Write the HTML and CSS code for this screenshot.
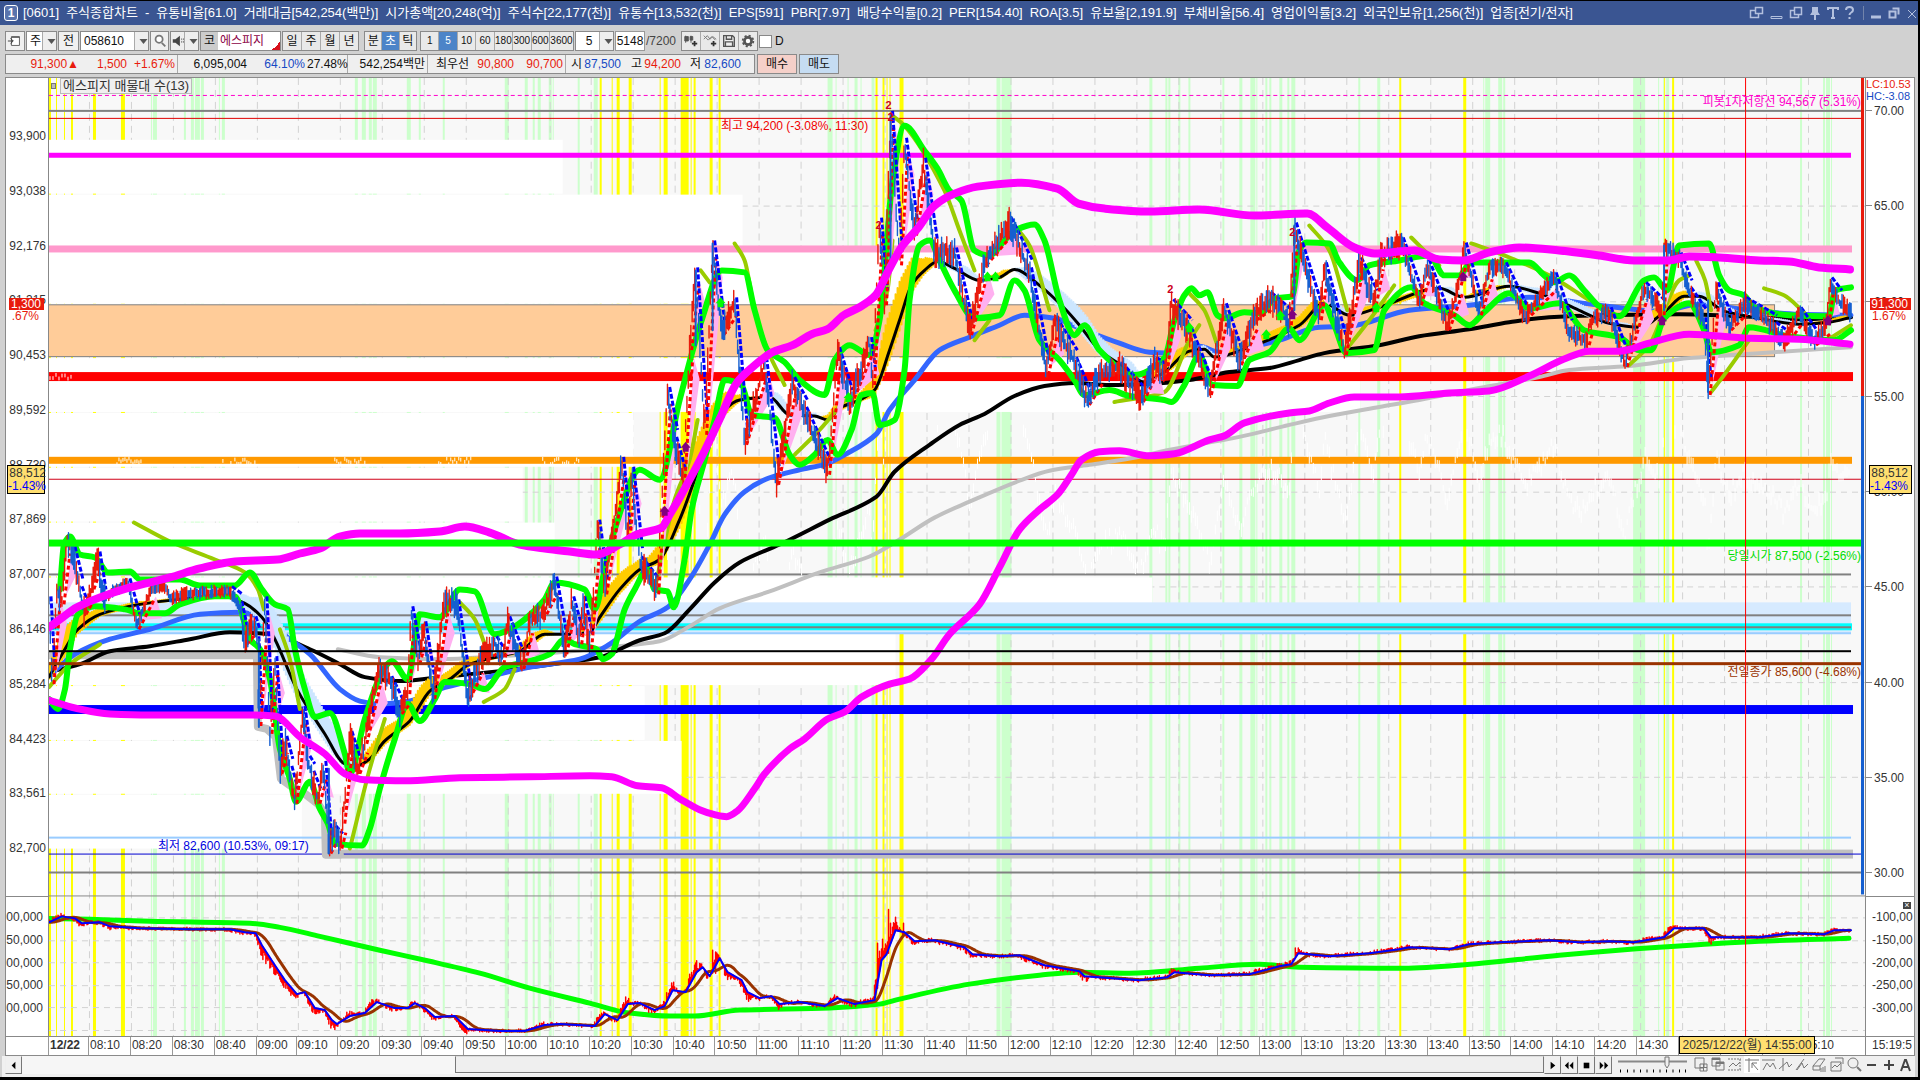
FILE: index.html
```html
<!DOCTYPE html>
<html lang="ko">
<head>
<meta charset="utf-8">
<title>[0601] 주식종합차트</title>
<link rel="stylesheet" href="styles.css">
</head>
<body>
<svg class="defs" aria-hidden="true">
  <symbol id="down" viewBox="0 0 14 18"><path d="M3.5 7h8l-4 5z" fill="#555"/></symbol>
</svg>
<div class="window">
  <header class="titlebar">
    <span class="badge">1</span>
    <h1><span>[0601]</span> <span>주식종합차트</span> <span>-</span> <span>유통비율[61.0]</span> <span>거래대금[542,254(백만)]</span> <span>시가총액[20,248(억)]</span> <span>주식수[22,177(천)]</span> <span>유통수[13,532(천)]</span> <span>EPS[591]</span> <span>PBR[7.97]</span> <span>배당수익률[0.2]</span> <span>PER[154.40]</span> <span>ROA[3.5]</span> <span>유보율[2,191.9]</span> <span>부채비율[56.4]</span> <span>영업이익률[3.2]</span> <span>외국인보유[1,256(천)]</span> <span>업종[전기/전자]</span></h1>
    <svg class="winicons" viewBox="0 0 170 24" width="170" height="24" fill="none" stroke="#b3c0de">
      <path d="M7.500 6.500h7v6h-7zM2.500 9.500h5v3h3v4h-8z" stroke-width="1.500"/>
      <path d="M23 15.500h11v2h-11z"/>
      <path d="M46.500 6.500h7v7h-7zM42.500 9.500h4v4h4v3h-8z" stroke-width="1.500"/>
      <path d="M64 6h6v5l2 3h-4v5h-2v-5h-4l2-3z" fill="#b3c0de" stroke="none"/>
      <path d="M80 9v-2h10v2M85 7v10M83 17h4" stroke-width="2"/>
      <path d="M98 9c0-4 7-4 7 0 0 3-3.500 2-3.500 5M101.500 16v2" stroke-width="2"/>
      <path d="M115.500 5v14" stroke="#7284ab"/>
      <path d="M123 16h10" stroke-width="3"/>
      <path d="M144.500 7.500h6v6M141.500 10.500h6v6h-6z" stroke-width="2"/>
      <path d="M160 9l8 8M168 9l-8 8"/>
    </svg>
  </header>

  <div class="toolbar">
    <button class="tb w18" aria-label="패널"><svg viewBox="0 0 18 18"><path d="M5 4h9v10H5zM5 5h9" stroke="#555" fill="#fff"/><path d="M1 9h6l-3-3M7 9l-3 3" stroke="#333" fill="none"/></svg></button>
    <div class="combo w31"><select aria-label="구분"><option>주</option></select><button aria-label="열기"><svg><use href="#down"/></svg></button></div>
    <button class="tb w22">전</button>
    <div class="combo w68"><input aria-label="종목코드" value="058610"><button aria-label="목록"><svg><use href="#down"/></svg></button></div>
    <button class="tb w20" aria-label="검색"><svg viewBox="0 0 18 18"><circle cx="8" cy="7" r="4" fill="#fff" stroke="#777" stroke-width="2"/><path d="M11 11l4 4" stroke="#777" stroke-width="2"/></svg></button>
    <div class="combo w28"><button class="grow" aria-label="소리"><svg viewBox="0 0 18 18"><path d="M2 7h3l5-4v12l-5-4H2z" fill="#444"/><path d="M12 6v6M14 6v6" stroke="#777" stroke-dasharray="2 1"/></svg></button><button aria-label="소리 옵션"><svg><use href="#down"/></svg></button></div>
    <div class="stock"><b>코</b><span>에스피지</span><i></i></div>
    <div class="group w76"><button>일</button><button>주</button><button>월</button><button>년</button></div>
    <div class="group w57"><button>분</button><button class="on">초</button><button>틱</button></div>
    <div class="group w153"><button>1</button><button class="on">5</button><button>10</button><button>60</button><button>180</button><button>300</button><button>600</button><button>3600</button></div>
    <div class="combo w38"><input class="mid" aria-label="주기" value="5"><button aria-label="주기 목록"><svg><use href="#down"/></svg></button></div>
    <label class="count"><input aria-label="봉 개수" value="5148">/7200</label>
    <div class="group w77">
      <button aria-label="차트 추가"><svg viewBox="0 0 18 18"><path d="M3 3v8M2 4h4v5H2zM9 3v8M8 4h3v4H8z" fill="#555" stroke="#555"/><path d="M13 9v6M10 12h6" stroke="#333" stroke-width="2"/></svg></button>
      <button aria-label="지표 추가"><svg viewBox="0 0 18 18"><path d="M2 7l4-4 3 4 3-3 4 3M2 3l5 5 4-4 4 4" stroke="#777" fill="none"/><path d="M13 9v6M10 12h6" stroke="#333" stroke-width="2"/></svg></button>
      <button aria-label="저장"><svg viewBox="0 0 18 18"><path d="M3 3h10l2 2v10H3zM6 3v4h6V3M5 15v-5h8v5" stroke="#555" fill="#eee" stroke-width="1.500"/></svg></button>
      <button aria-label="설정"><svg viewBox="0 0 18 18"><circle cx="9" cy="9" r="4" stroke="#555" stroke-width="3" fill="#fff"/><circle cx="9" cy="9" r="6" stroke="#555" stroke-width="2" fill="none" stroke-dasharray="2.400 2.300"/></svg></button>
    </div>
    <label class="check"><input type="checkbox">D</label>
  </div>

  <div class="quotes">
    <div class="strip">
      <span class="up">91,300▲</span><span class="up">1,500</span><span class="up sep">+1.67%</span>
      <span>6,095,004</span><span class="dn">64.10%</span><span class="sep">27.48%</span><span class="tail">542,254백만</span>
      <span>최우선</span><span class="up">90,800</span><span class="up sep">90,700</span>
      <span>시</span><span class="dn">87,500</span><span>고</span><span class="up">94,200</span><span>저</span><span class="dn">82,600</span>
    </div>
    <button class="buy">매수</button><button class="sell">매도</button>
  </div>

  <main class="chart">
    <div class="axis left">
      <div class="scale main"><span>93,900</span><span>93,038</span><span>92,176</span><span>91,315</span><span>90,453</span><span>89,592</span><span>88,730</span><span>87,869</span><span>87,007</span><span>86,146</span><span>85,284</span><span>84,423</span><span>83,561</span><span>82,700</span></div>
      <div class="scale sub"><span>00,000</span><span>50,000</span><span>00,000</span><span>50,000</span><span>00,000</span></div>
      <div class="tag price"><b>1,300</b><span>.67%</span></div>
      <div class="tag cursor"><span>88,512</span><b>-1.43%</b></div>
    </div>
    <div class="plot">
      <svg id="plot" viewBox="49 77 1817 961" preserveAspectRatio="none"></svg>
      <span class="legend"><i></i><b>에스피지 매물대 수(13)</b></span>
      <span class="note high">최고 94,200 (-3.08%, 11:30)</span>
      <span class="note low">최저 82,600 (10.53%, 09:17)</span>
      <span class="note pivot">피봇1차저항선 94,567 (5.31%)</span>
      <span class="note open">당일시가 87,500 (-2.56%)</span>
      <span class="note prev">전일종가 85,600 (-4.68%)</span>
    </div>
    <div class="axis right">
      <div class="limits"><span class="up">LC:10.53</span><span class="dn">HC:-3.08</span></div>
      <div class="scale main"><span>70.00</span><span>65.00</span><span>60.00</span><span>55.00</span><span>50.00</span><span>45.00</span><span>40.00</span><span>35.00</span><span>30.00</span></div>
      <div class="scale sub"><span>-100,00</span><span>-150,00</span><span>-200,00</span><span>-250,00</span><span>-300,00</span></div>
      <div class="tag price"><b>91,300</b><span>1.67%</span></div>
      <div class="tag cursor"><span>88,512</span><b>-1.43%</b></div>
      <button class="close" aria-label="닫기">×</button>
    </div>
    <div class="times" id="times"></div>
    <div class="last">15:19:5</div>
  </main>

  <footer class="bottom">
    <button class="key" aria-label="왼쪽"><svg viewBox="0 0 16 16"><path d="M10 4v8L6 8z"/></svg></button>
    <div class="track"><div class="thumb"></div></div>
    <button class="key" aria-label="재생"><svg viewBox="0 0 16 16"><path d="M6 4v8l5-4z"/></svg></button>
    <button class="key" aria-label="뒤로"><svg viewBox="0 0 16 16"><path d="M7 4v8L3 8zM12 4v8L8 8z"/></svg></button>
    <button class="key" aria-label="정지"><svg viewBox="0 0 16 16"><path d="M5 5h6v6H5z"/></svg></button>
    <button class="key" aria-label="앞으로"><svg viewBox="0 0 16 16"><path d="M4 4v8l4-4zM9 4v8l4-4z"/></svg></button>
    <svg class="zoombar" viewBox="0 0 70 17"><path d="M0 5.500h69" stroke="#888" stroke-width="2"/><path d="M2.500 13.500v3M9.500 13.500v3M16 13.500v3M22.500 13.500v3M29 13.500v3M35.500 13.500v3M42 13.500v3M48.500 13.500v3M55 13.500v3M61.500 13.500v3M67.500 13.500v3" stroke="#000"/><path d="M47 1h4v8l-2 3-2-3z" fill="#eee" stroke="#777"/></svg>
    <svg class="tools" viewBox="0 0 220 18" fill="none" stroke="#777">
      <path d="M1 2h9v10H1zM6 8h7v7H6zM9.500 8v7M6 11.500h7"/>
      <path d="M18 2h8v8h-8zM22 6h8v8h-8z" fill="#eee"/><path d="M18 3h8M22 7h8" stroke-width="2"/>
      <path d="M34 3h13M34 14h13M46 3v11" stroke-dasharray="2 1"/><path d="M35 11l4-4 3 3 4-4"/>
      <path d="M50 0h16v17H50z" fill="#fff" stroke="none"/><path d="M51 4h14M55 2v14M58 7l6 7M58 12V7h5"/>
      <path d="M68 4h13M69 14l4-7 3 4 3-4 3 6"/>
      <path d="M89 2v13M85 13l8-7 2 5 3-3"/>
      <path d="M102 14l8-11M103 14l5-7 2 5 4-4"/>
      <path d="M119 10l6-7h6l-5 7zM119 10v4h7v-4M127 12v4M129 11v5M131 10v6"/>
      <path d="M141 2h8v6M137 6h10v9h-10z" fill="#eee"/><path d="M138 12l3-3 2 2 4-4"/>
      <circle cx="159" cy="7" r="5"/><path d="M163 11l4 4" stroke-width="2"/>
      <path d="M173 9h9M190 9h10M195 4v10" stroke="#444" stroke-width="2"/>
      <path d="M207 15l4-11h1l4 11M209 11h6" stroke="#444" stroke-width="2"/>
    </svg>
  </footer>
</div>
<script src="chart.js"></script>
</body>
</html>
```
FILE: styles.css
```css
* { box-sizing: border-box; }
body { margin: 0; background: #000; color: #111; font: 12px/16px "Liberation Sans", "Noto Sans CJK KR", sans-serif; }
button, input, select { font: inherit; color: inherit; margin: 0; padding: 0; border: 0; border-radius: 0; min-width: 0; }
.defs { position: absolute; width: 0; height: 0; }
.window { height: 100vh; padding: 1px 3px 0 2px; display: flex; flex-direction: column; background: #d1d1d1; border-bottom: 3px solid #000; border-top: 1px solid #000; border-right: 2px solid #000; }
.up { color: #e81b0c; }
.dn { color: #1549c4; }

.titlebar { flex: 0 0 24px; margin: -1px -3px 0 -2px; padding: 0 0 0 4px; display: flex; align-items: center; gap: 5px; background: #3a5592; color: #fff; overflow: hidden; white-space: nowrap; }
.titlebar h1 { flex: 1; margin: 0; display: flex; gap: 7px; font-size: 13px; font-weight: 400; }
.badge { width: 14px; height: 16px; border: 1px solid #fff; border-radius: 3px; text-align: center; line-height: 15px; font-weight: 700; background: #5a74ad; }

.toolbar { flex: 0 0 20px; margin: 6px 0 0 3px; display: flex; gap: 1px; white-space: nowrap; }
.toolbar svg { width: 16px; height: 18px; display: block; margin: auto; }
.tb, .combo, .group, .stock { height: 20px; border: 1px solid #8a8a8a; background: #f0f0f0; display: flex; }
.tb { justify-content: center; align-items: center; }
.combo select, .combo input { flex: 1; width: 0; appearance: none; background: #fff; padding-left: 3px; }
.combo button { flex: 0 0 14px; background: #eee; border-left: 1px solid #aaa; overflow: hidden; }
.combo .grow { flex: 1; border: 0; }
.combo .mid { text-align: center; }
.group button { flex: 1; background: #e9e9e9; border-left: 1px solid #aaa; overflow: hidden; display: flex; justify-content: center; align-items: center; }
.group button:first-child { border-left: 0; }
.group .on { background: #4c84c8; color: #fff; }
.w18 { width: 20px; } .w31 { width: 31px; } .w22 { width: 21px; } .w68 { width: 69px; } .w20 { width: 19px; } .w28 { width: 29px; }
.w76 { width: 77px; } .w57 { width: 53px; margin-left: 4px; } .w153 { width: 154px; margin-left: 2px; } .w38 { width: 39px; } .w77 { width: 77px; margin-left: 3px; }
.w153 button { font-size: 10px; }
.w153 button:last-child { flex: 0 0 24px; }
.stock { position: relative; width: 81px; background: #fff; }
.stock b { width: 17px; background: #ccc; text-align: center; font-weight: 400; line-height: 18px; }
.stock span { color: #8b0045; padding-left: 2px; line-height: 18px; }
.stock i { position: absolute; right: 0; bottom: 0; width: 8px; height: 8px; background: linear-gradient(135deg, transparent 50%, #d8101c 50%); }
.count { display: flex; align-items: center; width: 62px; color: #444; }
.count input { width: 30px; height: 20px; border: 1px solid #999; background: #fff; text-align: center; color: #111; margin-right: 1px; }
.check { display: flex; align-items: center; gap: 3px; }
.check input { appearance: none; width: 13px; height: 13px; border: 1px solid #888; background: #fff; }

.quotes { flex: 0 0 20px; margin: 3px 0 3px 3px; display: flex; gap: 2px; white-space: nowrap; }
.strip { width: 750px; border: 1px solid #8a8a8a; background: #efefef; display: grid; grid-template-columns: 75px 48px 49px 71px 58px 41px 80px 43px 45px 50px 18px 39px 21px 39px 20px 40px; line-height: 18px; text-align: right; }
.strip span { padding-right: 2px; }
.strip .sep, .strip .tail { border-right: 1px solid #aaa; }
.quotes button { width: 40px; border: 1px solid #8a8a8a; }
.quotes .buy { background: #f5d0c9; }
.quotes .sell { background: #c5dcf2; }

.chart { flex: 1; min-height: 0; margin: 0 0 0 3px; display: grid; grid-template: minmax(0, 1fr) 19px / 43px minmax(0, 1fr) 49px; background: #fff; border: 1px solid #8a8a8a; color: #333; }
.axis { position: relative; overflow: hidden; white-space: nowrap; display: grid; grid-template: minmax(0, 41fr) minmax(0, 7fr) / minmax(0, 1fr); }
.left { border-right: 1px solid #888; }
.right { border-left: 1px solid #888; }
.scale { display: flex; flex-direction: column; justify-content: space-between; align-items: flex-end; }
.scale + .scale { border-top: 1px solid #888; }
.left .main { padding: 50px 2px 40px 0; }
.right .main { padding: 25px 4px 15px 0; align-items: flex-start; }
.right .main span::before { content: ""; display: inline-block; width: 6px; margin-right: 2px; border-top: 1px solid #888; vertical-align: 4px; }
.scale.sub { padding: 12px 5px 20px 0; }
.right .sub { align-items: flex-start; padding-left: 6px; }
.limits { position: absolute; top: 0; left: 0; line-height: 12px; font-size: 11px; display: grid; z-index: 1; }
.tag { position: absolute; right: 4px; left: 3px; display: grid; text-align: right; line-height: 12px; }
.tag b { font-weight: 400; }
.price { top: 23%; color: #e81b0c; }
.price b { background: #e81b0c; color: #fff; padding-right: 3px; }
.price span { padding-right: 5px; }
.right .price { left: 4px; right: 3px; }
.cursor { top: 40.400%; left: 1px; right: 3px; height: 29px; border: 1px solid #000; background: #ffdf70; padding: 1px 1px 0 0; line-height: 13px; }
.right .cursor { left: 3px; right: 2px; padding-right: 3px; }
.cursor b { color: #00f; }
.close { position: absolute; right: 3px; top: 86%; width: 8px; height: 7px; background: #444; color: #fff; font-size: 9px; line-height: 7px; }

.plot { position: relative; background: #f8f8f8; overflow: hidden; white-space: nowrap; }
.plot svg { position: absolute; inset: 0; width: 100%; height: 100%; }
.legend { position: absolute; top: 0; left: 2px; display: flex; align-items: center; gap: 4px; font-size: 13px; }
.legend i { width: 5px; height: 6px; border: 1px solid #777; background: #bbb; }
.legend b { font-weight: 400; padding: 0 2px; line-height: 14px; border: 1px solid #bbb; background: #f0f0f0; }
.note { position: absolute; line-height: 16px; }
.high { left: 37%; top: 4.200%; color: #f00000; }
.low { left: 6%; top: 79.300%; color: #0000e0; }
.pivot { right: 4px; top: 1.700%; color: #f0c; }
.open { right: 4px; top: 49.100%; color: #0d0; }
.prev { right: 4px; top: 61.200%; color: #930; }

.times { grid-column: 1 / 3; position: relative; display: flex; padding-left: 42px; border-top: 1px solid #888; }
.times span { border-left: 1px solid #999; padding-left: 1px; min-width: 0; white-space: nowrap; line-height: 16px; }
.times span:first-child { font-weight: 700; }
.times .now { position: absolute; left: 90%; width: 136px; top: -1px; height: 18px; border: 1px solid #000; background: #ffdf70; text-align: center; line-height: 16px; white-space: nowrap; }
.times .cut { padding-left: 6px; }
.last { border-top: 1px solid #888; border-left: 1px solid #888; padding-left: 6px; line-height: 16px; }

.bottom { flex: 0 0 20px; padding: 0 1px 3px 3px; display: flex; background: #f0f0f0; }
.key { width: 17px; background: #f0f0f0; border: 1px solid #777; border-top-color: #eee; border-left-color: #eee; }
.key svg { display: block; width: 15px; height: 15px; fill: #000; }
.track { flex: 1; padding-left: 22.700%; background: #f6f6f6; }
.thumb { height: 17px; background: #efefef; border: 1px solid #777; border-top-color: #ddd; }
.zoombar { width: 70px; height: 17px; margin: 0 6px; }
.tools { width: 220px; height: 18px; }
```
FILE: chart.js
```js
const NS = "http://www.w3.org/2000/svg";
const svg = document.getElementById("plot");
let seed = 7;
const rnd = () => (seed = (seed * 16807) % 2147483647) / 2147483647;
const el = (name, attrs) => {
  const n = document.createElementNS(NS, name);
  for (const k in attrs) n.setAttribute(k, attrs[k]);
  svg.appendChild(n);
};
const rect = (x, y, w, h, fill, stroke) => el("rect", { x, y, width: w, height: h, fill, stroke: stroke || "none" });
const path = (d, stroke, w, dash) => el("path", { d, stroke, "stroke-width": w, fill: "none", "stroke-linejoin": "round", "stroke-linecap": "round", ...(dash ? { "stroke-dasharray": dash, "stroke-linecap": "butt" } : {}) });
const parse = s => s.split(" ").map(p => p.split(",").map(Number));
const line = (s, stroke, w) => path("M" + s.split(" ").join("L"), stroke, w);

/* smooth curve through the points that never overshoots them */
const slopes = p => {
  const k = [];
  for (let i = 1; i < p.length; i++) k.push((p[i][1] - p[i - 1][1]) / (p[i][0] - p[i - 1][0]));
  return p.map((_, i) => {
    if (i === 0) return k[0];
    if (i === p.length - 1) return k[i - 1];
    return k[i - 1] * k[i] <= 0 ? 0 : 2 * k[i - 1] * k[i] / (k[i - 1] + k[i]);
  });
};
const curve = (s, stroke, w) => {
  const p = parse(s), m = slopes(p);
  let d = `M${p[0]}`;
  for (let i = 1; i < p.length; i++) {
    const h = (p[i][0] - p[i - 1][0]) / 3;
    d += `C${p[i - 1][0] + h} ${p[i - 1][1] + m[i - 1] * h} ${p[i][0] - h} ${p[i][1] - m[i] * h} ${p[i][0]} ${p[i][1]}`;
  }
  path(d, stroke, w);
};
const at = (pts, x) => {
  if (x <= pts[0][0]) return pts[0][1];
  for (let i = 1; i < pts.length; i++) if (x <= pts[i][0]) {
    const [a, b] = pts[i - 1], [c, d] = pts[i];
    return b + (d - b) * (x - a) / (c - a);
  }
  return pts[pts.length - 1][1];
};

/* signal stripes */
const green = "151-152 153-157 184-186 191-194 195-200 201-204 219-220 222-225 355-358 362-366 369-372 373-377 407-411 419-421 443-445 505-509 525-528 533-535 538-541 549-552 553-554 578-580 594-598 828-833 836-837 848-849 855-858 861-862 872-875 997-1001 1002-1012 1150-1153 1166-1168 1169-1171 1179-1181 1189-1191 1223-1225 1240-1243 1251-1256 1257-1258 1266-1268 1270-1272 1280-1283 1288-1290 1292-1296 1359-1361 1378-1381 1484-1485 1486-1491 1499-1503 1504-1506 1634-1646 1659-1660 1664-1665 1667-1670 1801-1803 1824-1826 1827-1831 1832-1833";
const yellow = "49-51 56-57 64-65 71-73 93-96 121-125 600-602 612-613 617-620 629-632 660-661 664-668 681-689 691-692 694-696 710-713 719-721 876-878 883-885 887-888 890-891 900-904 1400-1402 1464-1467 1665-1666 1673-1675";
for (const [list, c] of [[green, "#ccffcc"], [yellow, "#ffff00"]])
  for (const r of list.split(" ")) { const [a, b] = r.split("-").map(Number); rect(a, 77, b - a, 961, c); }

/* grid */
const ticks = [89.5, 131.5, 173.5, 215.5, 257.5];
for (let i = 0; i < 37; i++) ticks.push(Math.round(297.7 + i * 41.97) + 0.5);
for (const x of ticks) path(`M${x} 77V1038`, "#d2d2d2", 1, "7 5");
for (const y of [205.5, 301.5, 396.5, 492.5, 587.5, 683.5, 778.5, 919.5, 942.5, 964.5, 987.5, 1009.5, 1032.5]) path(`M49 ${y}H1866`, "#d2d2d2", 1, "6 5");

/* volume-by-price boxes */
for (const [y, h, x] of [[139, 54, 563], [194, 54, 743], [249, 54, 1361], [303, 54, 1361], [358, 54, 1361], [413, 54, 634], [468, 54, 523], [523, 54, 555], [578, 54, 1153], [633, 53, 896], [687, 54, 645], [742, 53, 682], [796, 54, 302]])
  rect(49, y, x - 49, h, "#fff");
rect(48, 304.5, 1727.500, 52, "#ffcc99", "#808080");
rect(49, 603, 1803, 31, "#d6eaff");

/* levels */
path("M49 94.5H1862", "#ff00cc", 1, "4 3");
for (const [y, h, c, x2, x1] of [[109, 2, "#808080", 1862], [117, 1, "#e00000", 1862], [152, 5, "#ff00ff", 1852], [245, 7, "#ff99cc", 1853], [372, 9, "#ff0000", 1854], [457, 7, "#ff9900", 1853], [479, 1, "#d00018", 1862], [574, 2, "#808080", 1852], [615, 2, "#808080", 1852], [624, 7, "#00ffff", 1853], [627, 2, "#808080", 1852], [633, 2, "#99ccff", 1852], [706, 9, "#0000ff", 1854], [838, 2, "#99ccff", 1852], [851, 9, "#c0c0c0", 1854, 325], [855, 1, "#0000d0", 1862], [873, 2, "#808080", 1862]])
  rect(x1 || 49, y, x2 - (x1 || 49), h, c);

const price = parse("49,600 52,680 57,590 62,600 67,540 73,550 80,590 84,610 92,585 98,555 103,600 112,590 128,582 137,625 152,585 165,585 170,598 185,592 230,590 240,605 245,640 254,620 257,640 259,722 265,600 270,730 275,660 280,770 285,740 290,770 295,800 303,710 308,760 312,775 318,800 324,765 329,850 334,830 340,845 343,820 350,735 358,770 365,740 378,670 390,680 400,710 408,690 411,610 418,660 424,625 433,695 445,600 457,603 468,695 480,660 495,640 502,660 508,620 522,665 530,620 545,610 555,580 565,650 572,600 580,640 583,600 590,645 598,523 605,590 622,460 628,540 632,470 640,560 657,590 668,390 675,440 683,480 690,345 696,270 705,430 713,243 722,330 735,300 745,440 765,360 777,480 793,380 805,410 828,470 838,350 850,400 870,340 873,380 880,220 885,300 891,113 900,260 905,140 915,230 924,160 935,250 955,250 970,330 985,260 1010,220 1030,270 1047,370 1055,320 1075,360 1088,400 1100,370 1120,365 1142,397 1155,360 1165,375 1172,302 1190,330 1210,390 1225,306 1240,360 1255,315 1270,295 1290,320 1295,225 1320,315 1325,265 1345,350 1360,260 1375,300 1381,255 1402,240 1420,300 1428,262 1448,325 1460,280 1465,245 1480,310 1490,265 1505,265 1525,315 1555,275 1570,330 1588,340 1590,320 1610,310 1626,362 1645,285 1663,310 1665,245 1680,255 1690,290 1705,320 1709,390 1717,285 1730,325 1745,300 1775,325 1785,340 1800,310 1815,340 1828,320 1831,280 1840,300 1852,310");

/* faint ghost of the comparison series */
let ghost = "";
for (let x = 600; x < 1852; x += 2) {
  const y = at(price, x) + 160 + rnd() * 16;
  if (y > 425 && y < 565) ghost += `M${x} ${y.toFixed(1)}v${(5 + rnd() * 9).toFixed(1)}`;
}
for (let x = 95; x < 600; x += 2)
  if (Math.sin(x / 17) + rnd() > 1.2) ghost += `M${x} ${(457 + rnd() * 6).toFixed(1)}v3`;
for (let x = 50; x < 74; x += 3) ghost += `M${x} ${(373 + rnd() * 5).toFixed(1)}v3`;
path(ghost, "#ffffff", 1);

/* running low */
line("49,656 257,656 258,728 267,730 276,738 281,780 292,788 305,795 318,805 325,815 326,856 340,856", "#c0c0c0", 8);
curve("338,650 380,658 440,660 500,657 560,653 610,648 660,642 690,627 720,609 770,592 820,573 870,557 900,540 935,518 970,502 1020,481 1050,471 1090,465 1140,457 1160,452 1240,437 1290,425 1330,416 1380,407 1420,400 1480,388 1540,377 1570,370 1630,366 1690,358 1760,353 1852,347", "#c0c0c0", 4);
curve("49,673 80,665 110,652 150,647 190,640 230,633 270,635 310,650 340,665 365,678 400,682 440,678 500,672 560,664 600,658 640,641 665,634 690,610 715,583 740,563 780,545 830,520 877,497 895,472 930,445 960,425 985,414 1015,396 1045,386 1075,383 1110,385 1150,384 1190,380 1230,372 1270,368 1300,360 1325,353 1380,345 1420,336 1470,329 1510,322 1550,317 1600,315 1680,314 1740,316 1800,319 1852,317", "#000", 4);
curve("49,677 75,655 110,640 150,630 200,615 240,613 265,620 290,640 310,655 340,690 360,702 380,705 410,702 440,690 480,680 530,668 580,660 610,645 640,622 668,608 690,580 710,545 725,515 745,492 770,478 800,470 827,464 845,455 877,434 890,410 915,380 940,350 970,337 1000,325 1025,315 1055,318 1080,328 1120,343 1150,352 1180,353 1200,346 1220,352 1250,347 1280,340 1320,327 1350,326 1410,310 1470,305 1530,297 1600,305 1660,311 1700,304 1750,310 1800,314 1852,315", "#3366ff", 5);

/* ribbon round the short average: amber while rising, pale blue while falling */
const fastText = "49,678 62,655 78,630 100,615 140,605 180,600 225,597 245,604 262,618 275,640 297,690 325,735 345,765 357,767 370,760 385,742 410,722 430,692 450,680 470,665 500,657 520,652 545,635 570,635 590,633 600,618 620,590 640,570 660,560 680,520 695,480 710,440 725,410 740,400 770,397 790,415 815,416 828,420 840,408 860,400 875,390 890,350 900,320 912,285 925,270 938,261 955,268 980,280 1000,277 1015,269 1040,285 1065,308 1080,325 1100,350 1120,364 1145,382 1165,372 1190,351 1205,349 1215,357 1250,347 1300,325 1325,303 1350,315 1380,307 1440,288 1465,297 1510,286 1540,293 1580,310 1610,323 1640,327 1665,312 1685,296 1700,296 1725,311 1760,318 1800,324 1830,322 1852,317";
const fast = parse(fastText);
let up = "", down = "";
for (let x = 50; x < 1852; x += 2) {
  const s = at(fast, x + 12) - at(fast, x - 12), y = at(fast, x);
  if (s < 0) up += `M${x} ${(y + s * 0.55).toFixed(1)}V${(y - s * 0.15).toFixed(1)}`;
  else down += `M${x} ${(y - s * 0.6).toFixed(1)}V${(y + s * 0.2).toFixed(1)}`;
}
path(up, "#ffcc00", 2); path(down, "#cce6ff", 2);
curve(fastText, "#000", 3);

for (const s of ["134,523 170,542 215,560 245,573 258,590 264,610", "49,688 70,665 100,645", "280,630 290,660 300,710", "350,850 370,770 385,720", "460,603 475,620 485,645", "484,703 505,690 515,670", "655,590 675,500 690,460 698,420", "701,270 710,282", "735,243 745,260 755,310 768,350 785,385", "795,455 820,430 845,400", "876,330 888,290 893,240", "893,115 905,125 945,190 960,230 975,270", "975,340 990,320", "1015,225 1030,245 1050,310", "1115,402 1165,392 1190,340 1200,325", "1190,293 1205,310 1218,345", "1310,225 1330,250 1348,310", "1345,352 1370,320 1395,285", "1412,237 1440,265", "1472,243 1500,253 1550,275 1590,300", "1630,365 1650,345 1680,280 1690,275", "1697,260 1706,280 1712,310", "1712,392 1725,375 1750,340", "1765,288 1785,295 1805,312", "1828,340 1852,325"])
  curve(s, "#99cc00", 4);

/* candles, with the pale area that trails each rise */
let red = "", blue = "", pink = "";
for (let i = 1; i < price.length; i++) {
  const [a, b] = price[i - 1], [c, d] = price[i];
  if (b - d > 30) pink += `M${a + 4} ${b - 4}L${c + 4} ${d + 12}L${c + 10} ${d + 34}Z`;
}
el("path", { d: pink, fill: "#ffb0f0" });
for (let x = 49; x < 1853; x += 1.3) {
  const y = at(price, x), s = at(price, x + 2) - at(price, x - 2);
  const amp = x > 105 && x < 240 ? 5 : x > 1400 ? 9 : 14;
  const seg = `M${x.toFixed(1)} ${(y - rnd() * amp).toFixed(1)}V${(y + 4 + rnd() * amp).toFixed(1)}`;
  if (rnd() + s / 60 > 0.55) blue += seg; else red += seg;
}

/* channel */
curve("60,590 64,545 70,537 80,555 95,558 108,573 130,572 140,580 180,580 200,586 235,586 250,573 262,590 275,605 288,610 295,650 305,690 315,718 330,714 345,755 350,775 365,720 385,668 392,662 408,680 420,615 440,618 460,590 475,592 495,635 510,630 525,620 545,600 555,583 585,590 595,610 605,570 615,530 640,470 660,480 680,400 702,320 722,270 745,272 755,310 768,350 785,362 800,380 825,395 835,360 850,345 870,355 880,320 893,180 905,125 925,150 938,168 950,190 962,200 975,250 990,255 1005,240 1015,230 1035,224 1045,240 1060,300 1075,335 1085,325 1100,350 1135,375 1165,358 1175,320 1185,295 1192,288 1200,295 1208,292 1218,315 1225,318 1245,312 1262,313 1275,298 1293,296 1300,250 1307,242 1330,243 1340,262 1358,280 1370,265 1400,260 1430,255 1445,275 1460,275 1472,262 1530,262 1545,275 1555,282 1570,275 1585,290 1600,306 1620,316 1645,280 1655,277 1668,290 1680,245 1710,243 1720,275 1730,290 1745,295 1755,307 1790,315 1830,316 1836,290 1852,287", "#00ff00", 6);
curve("49,700 58,710 65,690 70,650 78,615 95,607 125,610 140,614 165,614 180,605 215,597 235,597 250,640 260,650 270,680 280,750 290,780 296,803 310,783 320,810 328,825 335,845 362,847 370,830 380,790 395,740 408,705 420,722 435,700 445,683 470,685 485,690 505,668 530,662 550,655 565,640 575,645 597,650 603,660 612,655 625,610 635,590 648,570 655,590 668,592 674,608 685,560 692,510 705,460 715,420 725,380 742,385 752,415 775,418 790,455 800,465 815,455 828,440 838,455 852,430 862,395 873,393 880,425 895,420 905,370 910,300 920,245 930,240 940,260 955,290 975,318 1000,315 1015,280 1025,290 1040,340 1060,360 1075,380 1085,395 1110,390 1130,396 1165,400 1172,402 1185,385 1200,355 1213,385 1238,386 1250,360 1270,352 1290,328 1300,340 1325,305 1335,325 1347,353 1375,350 1385,310 1412,287 1425,303 1455,315 1470,325 1485,312 1510,293 1530,308 1560,303 1585,330 1620,337 1640,350 1652,350 1665,318 1690,303 1705,330 1712,352 1740,345 1750,327 1790,336 1835,340 1852,330", "#00ff00", 6);

/* trailing stops */
for (let i = 1; i < price.length; i++) {
  const [a, b] = price[i - 1], [c, d] = price[i];
  if (d - b > 14) path(`M${a + 2} ${b - 3}L${c + 3} ${d - 10}`, "#0000ff", 3, "5 2");
  if (b - d > 14) path(`M${a + 2} ${b + 5}L${c + 3} ${d + 14}`, "#ff0000", 3, "4 3");
}
path(red, "#e81b0c", 1.4); path(blue, "#155fd0", 1.4);
path("M696 270V345M713 243V330M891 113V260M1295 225V310M1665 245V310M1709 300V392M259 640V728M329 770V855", "#155fd0", 2);

/* outer bands */
curve("49,628 60,620 77,608 100,598 130,588 170,578 200,569 235,562 278,560 300,554 320,549 340,537 360,534 400,534 440,532 465,527 490,533 520,545 545,549 570,552 597,555 620,545 637,535 662,528 670,515 680,498 702,457 721,417 737,383 753,367 773,352 793,345 812,334 828,329 844,315 860,307 876,295 889,270 903,245 919,227 935,205 955,193 978,186 1022,182 1058,188 1079,203 1105,208 1150,211 1200,209 1255,215 1308,213 1328,227 1355,247 1375,253 1415,250 1440,259 1465,260 1490,252 1520,247 1560,250 1600,255 1635,260 1670,260 1690,256 1720,257 1760,260 1790,261 1820,267 1851,269", "#ff00ff", 8);
curve("49,701 75,709 110,715 150,716 250,716 275,717 300,738 325,755 345,775 365,781 405,782 460,779 530,778 590,777 612,778 638,787 662,789 680,800 700,811 715,816 727,818 738,812 755,790 765,775 790,750 805,740 828,720 845,713 862,698 890,685 910,680 932,660 950,635 980,605 1000,568 1020,530 1040,510 1058,495 1072,475 1082,460 1100,452 1120,451 1150,456 1175,454 1210,440 1225,436 1245,423 1290,413 1310,411 1330,403 1355,397 1400,397 1450,393 1490,391 1530,376 1565,359 1590,351 1620,351 1650,343 1690,334 1750,338 1800,339 1851,344", "#ff00ff", 7);
rect(49, 540, 1813, 7, "#00ff00");
rect(49, 651, 1803, 2, "#000");
rect(49, 663, 1813, 3, "#993300");

/* markers */
for (const [x, y] of [[686, 448], [665, 512], [1293, 315], [1464, 277], [1663, 321], [1829, 321]])
  el("path", { d: `M${x} ${y - 6}l5 6h-2v4h-6v-4h-2z`, fill: "#800080" });
for (const [x, y] of [[721, 303], [849, 398], [988, 277], [996, 277], [1190, 328], [1267, 335], [1281, 316], [1377, 308]])
  el("path", { d: `M${x} ${y - 6}l5 6h-2v4h-6v-4h-2z`, fill: "#00ff00" });
for (const [x, y] of [[889, 108], [891, 120], [879, 228], [1171, 293], [1293, 235]]) {
  el("text", { x, y, fill: "#cc0022", "font-size": 11, "font-weight": 700, "text-anchor": "middle", "font-family": "Liberation Sans" });
  svg.lastChild.textContent = "2";
}

/* lower pane */
rect(49, 897, 1817, 1, "#888");
curve("49,920 90,921 150,923 250,925 280,929 320,938 380,952 430,963 480,975 530,990 590,1005 630,1015 670,1018 695,1018 740,1012 830,1010 880,1006 900,1001 970,986 1040,977 1080,974 1130,975 1200,970 1260,966 1300,969 1400,970 1460,967 1560,957 1660,949 1760,943 1850,940", "#00ff00", 5);
const flow = "49,924 62,918 75,920 82,925 100,924 110,928 140,930 190,931 230,931 245,934 256,935 262,947 275,967 285,982 297,996 305,994 315,1010 325,1012 332,1022 337,1026 350,1018 365,1015 377,1004 395,1010 408,1010 415,1005 425,1010 435,1019 455,1018 468,1031 500,1033 525,1033 545,1027 560,1026 595,1028 605,1016 618,1022 628,1006 640,1005 655,1012 665,1008 673,992 686,994 697,974 703,969 710,978 720,960 728,974 742,982 748,994 760,1000 772,998 780,1006 800,1004 825,1008 838,1000 855,1006 875,1002 882,962 887,956 896,932 905,934 915,943 935,942 965,949 973,956 1000,958 1020,957 1045,967 1080,973 1085,978 1140,982 1168,979 1175,974 1210,977 1250,976 1280,968 1292,966 1299,955 1330,958 1370,955 1400,951 1410,949 1450,951 1470,946 1500,944 1550,942 1580,944 1610,943 1635,944 1665,939 1675,930 1705,930 1712,939 1760,939 1790,935 1825,936 1835,932 1852,932";
const f = parse(flow);
let spikes = "", slow = "";
for (let x = 49; x < 1852; x++) {
  const y = at(f, x), s = at(f, x + 3) - at(f, x - 6);
  spikes += `M${x} ${y.toFixed(1)}v${(s * (0.2 + rnd() * 0.6) + rnd() * 4 - 2).toFixed(1)}`;
  let m = 0;
  for (let k = 0; k < 16; k++) m += at(f, x - k);
  slow += (slow ? "L" : "M") + x + " " + (m / 16).toFixed(1);
}
path(spikes + "M889 955V911M891 940V925M878 990V945M713 975V952M716 975V958M904 935V925", "#ff0000", 1.5);
path(slow, "#993300", 3);
line(flow, "#0000ff", 2);

/* limits of the day's move, and the crosshair */
rect(1862, 77, 3, 319, "#e81b0c"); rect(1862, 396, 3, 500, "#155fd0");
rect(1746, 77, 1, 961, "#ff0000");

/* time scale; the crosshair's tag lies over three of its cells */
const times = document.getElementById("times");
const cells = [["12/22", 40], ["08:10", 42], ["08:20", 42], ["08:30", 42], ["08:40", 42], ["09:00", 40]];
for (let m = 550; m <= 870; m += 10) cells.push([String(Math.floor(m / 60)).padStart(2, "0") + ":" + String(m % 60).padStart(2, "0"), 42]);
cells.push(["", 42], ["", 42], ["", 42], ["5:10", 57]);
for (const [label, w] of cells) {
  const s = document.createElement("span");
  s.textContent = label;
  s.style.flex = `${w} 1 0px`;
  if (label === "5:10") s.className = "cut";
  times.appendChild(s);
}
const now = document.createElement("div");
now.className = "now";
now.textContent = "2025/12/22(월) 14:55:00";
times.appendChild(now);
```
